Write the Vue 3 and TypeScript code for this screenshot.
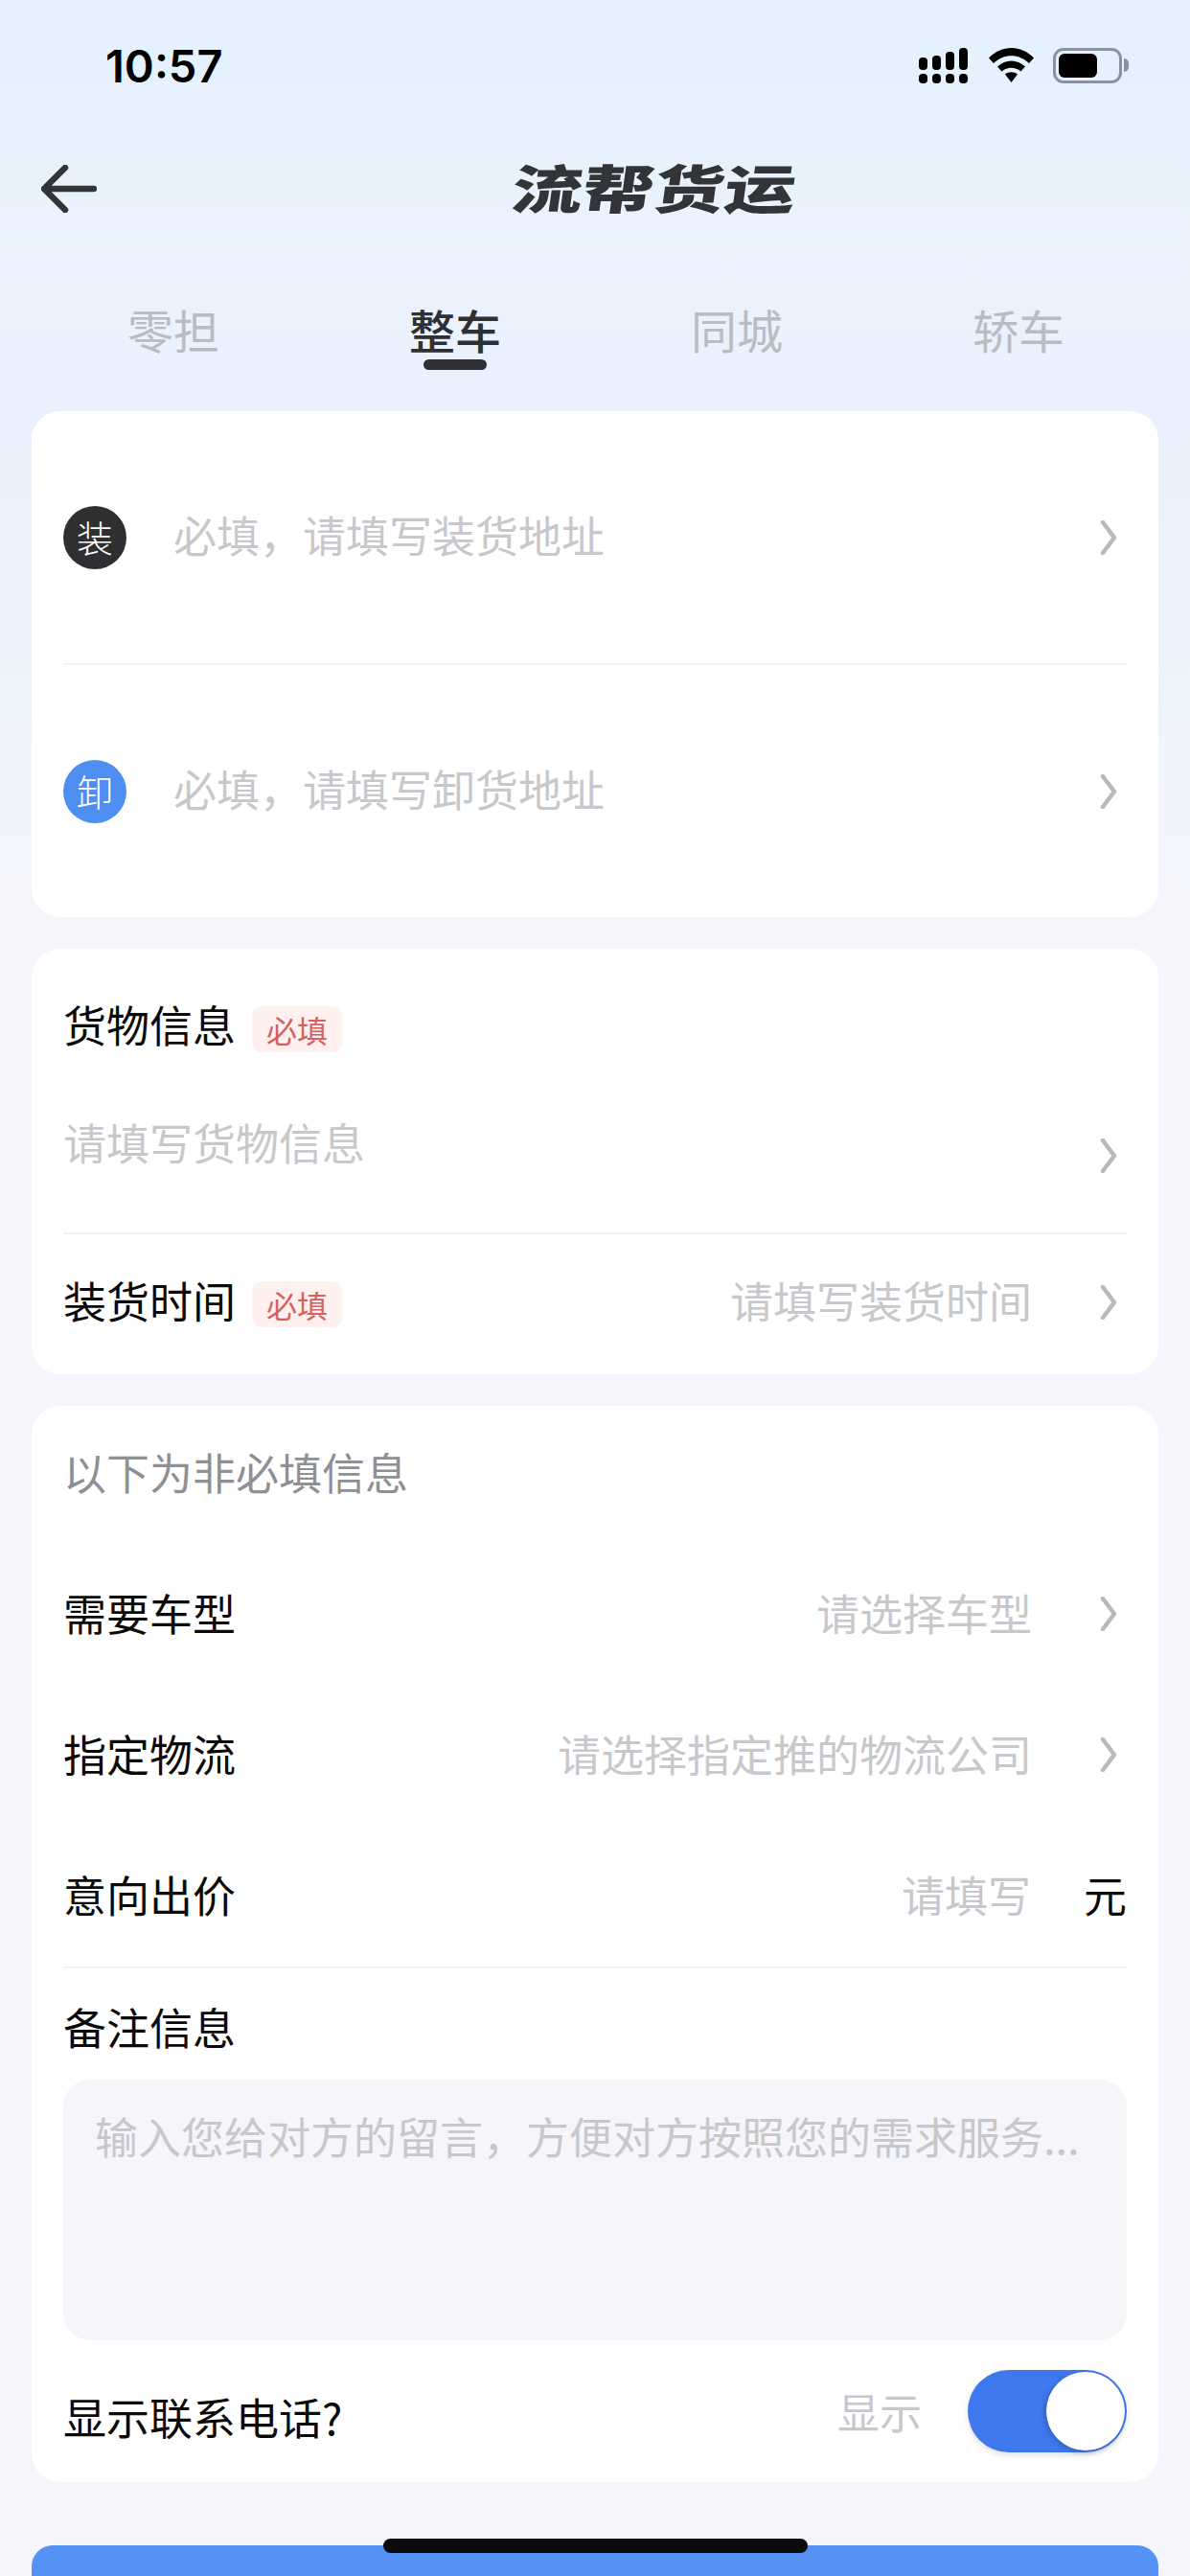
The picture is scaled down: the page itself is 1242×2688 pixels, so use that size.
<script setup lang="ts">
import { ref } from 'vue'

interface FieldRow {
  label: string
  placeholder?: string
  unit?: string
}

const tabs = ['零担', '整车', '同城', '轿车']
const activeTab = ref('整车')

const addressRows = [
  { mark: '装', tone: 'load', placeholder: '必填，请填写装货地址' },
  { mark: '卸', tone: 'unload', placeholder: '必填，请填写卸货地址' }
]

const optionalRows: FieldRow[] = [
  { label: '需要车型', placeholder: '请选择车型' },
  { label: '指定物流', placeholder: '请选择指定推的物流公司' },
  { label: '意向出价', placeholder: '请填写', unit: '元' }
]

const signalBars = [
  { x: 0, y: 10, h: 13 },
  { x: 14, y: 8, h: 15 },
  { x: 28, y: 4, h: 19 },
  { x: 42, y: 0, h: 23 }
]

const showPhone = ref(true)
</script>

<template>
  <div class="page">
    <div class="status-bar">
      <span class="time">10:57</span>
      <div class="status-icons">
        <svg class="signal" width="51" height="37" viewBox="0 0 51 37">
          <g v-for="bar in signalBars" :key="bar.x">
            <rect :x="bar.x" :y="bar.y" width="9" :height="bar.h" rx="4" />
            <rect :x="bar.x" y="27" width="9" height="10" rx="4" />
          </g>
        </svg>
        <svg class="wifi" width="47" height="36" viewBox="0 0 47 36">
          <path d="M0 10.500C13.500 -3.500 33.500 -3.500 47 10.500L42 16C31.500 5.500 15.500 5.500 5 16Z" />
          <path d="M9 19.500C17.500 11.500 29.500 11.500 38 19.500L33.500 24.500C27.500 19.500 19.500 19.500 13.500 24.500Z" />
          <path d="M17 27.500C20.500 24.500 26.500 24.500 30 27.500L23.500 36Z" />
        </svg>
        <div class="battery">
          <div class="battery-body"><div class="battery-level"></div></div>
          <div class="battery-nub"></div>
        </div>
      </div>
    </div>

    <header class="nav">
      <svg class="back" width="58" height="50" viewBox="0 0 58 50">
        <path d="M25 3 3 25l22 22M4 25h51" />
      </svg>
      <h1 class="brand">流帮货运</h1>
    </header>

    <nav class="tabs">
      <div
        v-for="tab in tabs"
        :key="tab"
        :class="['tab', { active: activeTab === tab }]"
        @click="activeTab = tab"
      >
        {{ tab }}
      </div>
    </nav>

    <main class="cards">
      <section class="card">
        <template v-for="(row, index) in addressRows" :key="row.mark">
          <div v-if="index > 0" class="divider"></div>
          <div class="address-row">
            <span :class="['mark', row.tone]">{{ row.mark }}</span>
            <span class="placeholder grow">{{ row.placeholder }}</span>
            <svg class="chevron" width="18" height="36" viewBox="0 0 18 36">
              <path d="M3 2l12 16L3 34" />
            </svg>
          </div>
        </template>
      </section>

      <section class="card">
        <div class="goods-title">
          <span class="label">货物信息</span>
          <span class="required">必填</span>
        </div>
        <div class="goods-row">
          <span class="placeholder grow">请填写货物信息</span>
          <svg class="chevron" width="18" height="36" viewBox="0 0 18 36">
            <path d="M3 2l12 16L3 34" />
          </svg>
        </div>
        <div class="divider"></div>
        <div class="time-row">
          <span class="label">装货时间</span>
          <span class="required">必填</span>
          <span class="placeholder value">请填写装货时间</span>
          <svg class="chevron" width="18" height="36" viewBox="0 0 18 36">
            <path d="M3 2l12 16L3 34" />
          </svg>
        </div>
      </section>

      <section class="card optional">
        <div class="intro">以下为非必填信息</div>
        <div v-for="row in optionalRows" :key="row.label" class="field-row">
          <span class="label">{{ row.label }}</span>
          <span class="placeholder value">{{ row.placeholder }}</span>
          <span v-if="row.unit" class="unit">{{ row.unit }}</span>
          <svg v-else class="chevron" width="18" height="36" viewBox="0 0 18 36">
            <path d="M3 2l12 16L3 34" />
          </svg>
        </div>
        <div class="divider"></div>
        <div class="remark-title label">备注信息</div>
        <div class="remark-box">
          <span class="placeholder">输入您给对方的留言，方便对方按照您的需求服务...</span>
        </div>
        <div class="contact-row">
          <span class="label contact-label">显示联系电话?</span>
          <span class="placeholder contact-state">显示</span>
          <div :class="['switch', { on: showPhone }]" @click="showPhone = !showPhone">
            <div class="knob"></div>
          </div>
        </div>
      </section>

      <div class="submit"></div>
    </main>

    <div class="home-indicator"></div>
  </div>
</template>

<style>
html,
body {
  margin: 0;
  background: #f5f6fb;
}
</style>

<style scoped>
.page {
  position: relative;
  width: 1242px;
  height: 2688px;
  overflow: hidden;
  font-family: "Noto Sans CJK SC", "Noto Sans", sans-serif;
  background: linear-gradient(180deg, #e4f0fd 0, #eaf3fe 260px, #e8f1fd 430px, #eef4fc 700px, #f5f6fb 1000px);
}

.status-bar {
  height: 136px;
  display: flex;
  align-items: center;
  justify-content: space-between;
  padding: 0 64px 0 110px;
  box-sizing: border-box;
}

.time {
  font-family: Inter, "Liberation Sans", sans-serif;
  font-size: 47px;
  font-weight: 600;
  color: #000;
}

.status-icons {
  display: flex;
  align-items: center;
  gap: 22px;
}

.signal,
.wifi {
  fill: #000;
}

.battery {
  display: flex;
  align-items: center;
  gap: 2px;
  margin-left: -2px;
}

.battery-body {
  width: 72px;
  height: 37px;
  box-sizing: border-box;
  border: 3px solid #8a91a0;
  border-radius: 11px;
  padding: 3px;
}

.battery-level {
  width: 40px;
  height: 100%;
  background: #000;
  border-radius: 6px;
}

.battery-nub {
  width: 5px;
  height: 14px;
  background: #8a91a0;
  border-radius: 0 5px 5px 0;
}

.nav {
  position: relative;
  height: 122px;
  display: flex;
  align-items: center;
  justify-content: center;
  padding-left: 124px;
}

.back {
  position: absolute;
  left: 43px;
  top: 36px;
  fill: none;
  stroke: #333438;
  stroke-width: 6.500;
  stroke-linecap: round;
  stroke-linejoin: round;
}

.brand {
  margin: 0 0 6px;
  font-size: 74px;
  font-weight: 900;
  line-height: 1;
  color: #333437;
  transform: skewX(-8deg) scaleY(0.74);
}

.tabs {
  height: 171px;
  display: grid;
  grid-template-columns: repeat(4, 294px);
  padding-left: 34px;
  box-sizing: border-box;
}

.tab {
  position: relative;
  height: 170px;
  display: flex;
  align-items: center;
  justify-content: center;
  font-size: 48px;
  line-height: 68px;
  color: #b9bcc2;
}

.tab.active {
  color: #2f3034;
  font-weight: 500;
}

.tab.active::after {
  content: "";
  position: absolute;
  left: 50%;
  top: 117px;
  width: 66px;
  height: 11px;
  margin-left: -33px;
  border-radius: 6px;
  background: #2f3034;
}

.cards {
  display: flex;
  flex-direction: column;
  gap: 33px;
  padding: 0 33px;
}

.card {
  background: #fff;
  border-radius: 30px;
  padding: 0 33px;
}

.divider {
  height: 2px;
  background: #f3f3f5;
}

.address-row {
  height: 263px;
  display: flex;
  align-items: center;
}

.address-row .placeholder {
  margin-bottom: 6px;
}

.mark {
  width: 66px;
  height: 66px;
  border-radius: 50%;
  display: flex;
  align-items: center;
  justify-content: center;
  margin-right: 49px;
  padding-bottom: 2px;
  box-sizing: border-box;
  font-size: 38px;
  font-weight: 300;
  color: #fff;
}

.mark.load {
  background: #2f2f31;
}

.mark.unload {
  background: #4f8ff2;
}

.placeholder {
  font-size: 45px;
  line-height: 68px;
  color: #c8c8cc;
  white-space: nowrap;
}

.grow {
  flex: 1;
}

.value {
  flex: 1;
  text-align: right;
  margin-right: 71px;
}

.label {
  font-size: 45px;
  line-height: 68px;
  color: #0a0a0a;
}

.chevron {
  flex: none;
  margin-right: 10px;
  fill: none;
  stroke: #b8b9bd;
  stroke-width: 4.500;
  stroke-linecap: round;
  stroke-linejoin: round;
}

.required {
  margin-left: 17px;
  width: 94px;
  height: 48px;
  display: flex;
  align-items: center;
  justify-content: center;
  border-radius: 10px;
  background: #fdf0ef;
  font-size: 32px;
  color: #d6605f;
}

.goods-title {
  display: flex;
  align-items: center;
  padding-top: 48px;
  height: 68px;
}

.goods-title .label {
  margin-bottom: 6px;
}

.goods-title .required {
  margin-top: 3px;
}

.goods-row {
  height: 180px;
  display: flex;
  align-items: flex-start;
}

.goods-row .placeholder {
  margin-top: 52px;
}

.goods-row .chevron {
  margin-top: 82px;
}

.time-row {
  height: 138px;
  padding-bottom: 8px;
  display: flex;
  align-items: center;
}

.time-row .required {
  margin-top: 8px;
}

.time-row .chevron {
  margin-top: 3px;
}

.optional {
  height: 1123px;
}

.intro {
  padding: 35px 0 39px;
  font-size: 45px;
  line-height: 68px;
  color: #8f9094;
}

.optional .divider {
  margin-top: 2px;
}

.field-row {
  height: 147px;
  display: flex;
  align-items: center;
}

.field-row .chevron {
  margin-top: 3px;
}

.unit {
  width: 45px;
  margin-left: -16px;
  font-size: 45px;
  line-height: 68px;
  color: #0a0a0a;
}

.remark-title {
  padding: 27px 0 21px;
}

.remark-box {
  height: 272px;
  box-sizing: border-box;
  padding: 25px 33px;
  border-radius: 28px;
  background: #f5f5fa;
  overflow: hidden;
}

.contact-row {
  height: 148px;
  display: flex;
  align-items: center;
}

.contact-label {
  flex: 1;
  margin-top: 12px;
}

.contact-state {
  margin-right: 48px;
  font-size: 44px;
}

.switch {
  width: 166px;
  height: 86px;
  box-sizing: border-box;
  padding: 2px;
  display: flex;
  justify-content: flex-start;
  border-radius: 43px;
  background: #d8d8dc;
  box-shadow: 0 3px 6px rgba(0, 0, 0, 0.12);
}

.switch.on {
  justify-content: flex-end;
  background: #3f78ee;
}

.knob {
  width: 82px;
  height: 82px;
  border-radius: 50%;
  background: #fff;
  box-shadow: -2px 2px 5px rgba(20, 40, 90, 0.3);
}

.submit {
  height: 120px;
  margin-top: 33px;
  border-radius: 22px 22px 0 0;
  background: #5592f5;
}

.home-indicator {
  position: absolute;
  left: 400px;
  top: 2649px;
  width: 443px;
  height: 15px;
  border-radius: 8px;
  background: #0b0b0d;
}
</style>
